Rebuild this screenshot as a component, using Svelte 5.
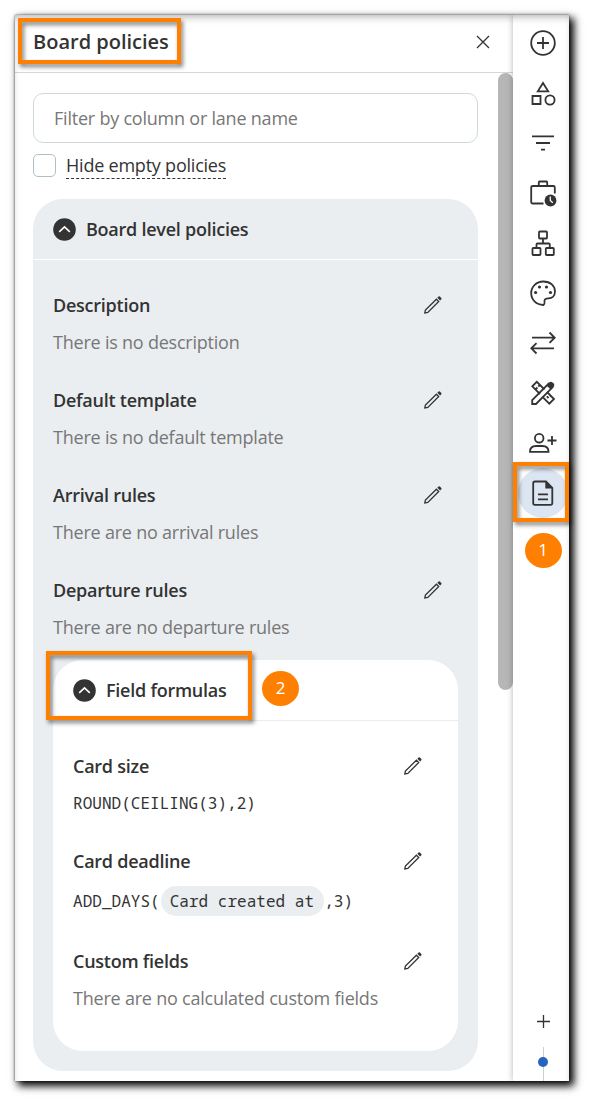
<script lang="ts">
	interface Policy {
		title: string;
		text?: string;
		formula?: { before: string; field?: string; after?: string };
	}

	let filter = '';
	let hideEmpty = false;
	let boardOpen = true;
	let formulasOpen = true;
	let active = 'policies';

	const boardPolicies: Policy[] = [
		{ title: 'Description', text: 'There is no description' },
		{ title: 'Default template', text: 'There is no default template' },
		{ title: 'Arrival rules', text: 'There are no arrival rules' },
		{ title: 'Departure rules', text: 'There are no departure rules' }
	];

	const fieldFormulas: Policy[] = [
		{ title: 'Card size', formula: { before: 'ROUND(CEILING(3),2)' } },
		{ title: 'Card deadline', formula: { before: 'ADD_DAYS(', field: 'Card created at', after: ',3)' } },
		{ title: 'Custom fields', text: 'There are no calculated custom fields' }
	];

	const tools = ['add', 'shapes', 'filter', 'timesheet', 'structure', 'theme', 'transfer', 'tools', 'invite', 'policies'];
</script>

{#snippet pencil()}
	<button class="edit" aria-label="edit">
		<svg width="20" height="20" viewBox="0 0 20 20">
			<path d="M1.8 18l.6-3L13.4 4.2l2.3 2.3L4.8 17.4z" />
			<path class="solid" d="M14.3 2.8l1.3-1.2q.6-.6 1.3 0l1.4 1.4q.6.7 0 1.3l-1.2 1.3z" />
		</svg>
	</button>
{/snippet}

{#snippet chevron()}
	<svg class="chevron" width="23" height="23" viewBox="0 0 23 23">
		<circle cx="11.5" cy="11.5" r="11.3" />
		<path d="M6.2 13.8l5.3-5 5.3 5" />
	</svg>
{/snippet}

{#snippet policy(item: Policy)}
	<div class="policy">
		<div class="policy-title">
			<h3>{item.title}</h3>
			{@render pencil()}
		</div>
		{#if item.formula}
			<div class="formula" class:with-field={item.formula.field}>
				<span>{item.formula.before}</span>
				{#if item.formula.field}
					<span class="field">{item.formula.field}</span>
					<span>{item.formula.after}</span>
				{/if}
			</div>
		{:else}
			<p>{item.text}</p>
		{/if}
	</div>
{/snippet}

<div class="page">
	<div class="window">
		<section class="panel">
			<header>
				<h1>Board policies</h1>
				<button class="close" aria-label="close">
					<svg width="14" height="14" viewBox="0 0 14 14"><path d="M1 1l12 12M13 1L1 13" /></svg>
				</button>
			</header>
			<div class="scroll">
				<div class="content">
					<input class="filter" placeholder="Filter by column or lane name" bind:value={filter} />
					<label>
						<input type="checkbox" bind:checked={hideEmpty} />
						<span>Hide empty policies</span>
					</label>
					<div class="group board">
						<button class="group-head" on:click={() => (boardOpen = !boardOpen)}>
							{@render chevron()}
							Board level policies
						</button>
						{#if boardOpen}
							{#each boardPolicies as item}
								{@render policy(item)}
							{/each}
							<div class="group formulas">
								<button class="group-head" on:click={() => (formulasOpen = !formulasOpen)}>
									{@render chevron()}
									Field formulas
								</button>
								{#if formulasOpen}
									{#each fieldFormulas as item}
										{@render policy(item)}
									{/each}
								{/if}
							</div>
						{/if}
					</div>
				</div>
				<div class="track"><div class="thumb"></div></div>
			</div>
		</section>

		<nav>
			{#each tools as tool}
				<button class="tool" class:active={tool === active} aria-label={tool} on:click={() => (active = tool)}>
					<svg width="30" height="30" viewBox="0 0 30 30">
						{#if tool === 'add'}
							<circle cx="15" cy="15" r="11.8" />
							<path d="M15 9v12M9 15h12" />
						{:else if tool === 'shapes'}
							<path d="M15 5l5.2 8.3H9.8z" />
							<path d="M4.5 18h8v8h-8z" />
							<circle cx="22" cy="22" r="4.6" />
						{:else if tool === 'filter'}
							<path d="M4 8.3h22M8 15h14M13 21.7h4" />
						{:else if tool === 'timesheet'}
							<path d="M15.5 25.5H4.7q-1.500 0-1.500-1.500V9.500Q3.200 8 4.700 8h20.600q1.500 0 1.500 1.500v6" />
							<path d="M10.800 8V4.300q0-.8.8-.8h6.800q.8 0 .8.8V8" />
							<circle class="solid" cx="22.500" cy="22.500" r="5.900" />
							<path class="hand" d="M22.300 18.500v4l2.500 2.200" />
						{:else if tool === 'structure'}
							<rect x="11" y="3.500" width="8" height="7" rx=".8" />
							<rect x="4.500" y="20" width="8" height="7" rx=".8" />
							<rect x="17.800" y="20" width="8" height="7" rx=".8" />
							<path d="M15 10.500v5M8.500 20v-3.500q0-1 1-1h11.300q1 0 1 1V20" />
						{:else if tool === 'theme'}
							<path d="M15.500 27C8 27 3.200 21.500 3.200 15S8.500 3.500 15.300 3.500c7.200 0 11.700 4.500 11.700 10 0 4.500-3 6.800-6.500 6.800-3 0-4.300 1.200-4 3.200.2 1.500-.3 3-1 3.500z" />
							<g class="dots">
								<circle cx="7.600" cy="14.500" r="1.600" />
								<circle cx="11.500" cy="9" r="1.600" />
								<circle cx="18.500" cy="9" r="1.600" />
								<circle cx="22.500" cy="14.500" r="1.600" />
							</g>
						{:else if tool === 'transfer'}
							<path d="M4 9.700h22.500M21.500 4.500l5.200 5.200-5.200 5.200M26 20.300H3.500M8.500 15.100l-5.200 5.200 5.200 5.200" />
						{:else if tool === 'tools'}
							<path d="M12 16L4.300 8.300l4.500-4.500 7.700 7.700M19 14l7 7-4.700 4.700-6.800-6.900M9.500 9.500l-1.700 1.500M12.300 6.800l-2 1.700M18.800 18.300l1.800 1.700M22 18.700l1.300-1.400" />
							<path d="M4.200 26v-4L20.700 5.500l3.800 3.800L8 26z" />
							<path class="solid" d="M18.500 7.500l3-3.200q1.600-1.200 3 .1l1.200 1.200q1.300 1.500.1 3l-3.200 3z" />
						{:else if tool === 'invite'}
							<circle cx="11.200" cy="10.200" r="4.300" />
							<path d="M2 23.800q0-5.800 6-5.800h6.500q6 0 6 5.800z" />
							<path d="M24 8v9M19.500 12.500h9" />
						{:else}
							<path d="M7 3.500h11l6.300 6.300V25q0 1.800-1.800 1.800H7q-1.800 0-1.800-1.800V5.300Q5.200 3.500 7 3.500z" />
							<path class="solid" d="M17.300 3.500v7h7.300z" />
							<path d="M10 16.300h10M10 21.300h10" />
						{/if}
					</svg>
				</button>
			{/each}
			<div class="timeline">
				<svg width="14" height="14" viewBox="0 0 14 14"><path d="M7.5 1v13M1 7.5h13" /></svg>
				<div class="line"><i></i></div>
			</div>
		</nav>
	</div>

	<!-- callouts laid over the window -->
	<div class="mark mark-title"></div>
	<div class="mark mark-tool"></div>
	<div class="mark mark-formulas"></div>
	<div class="step step-1">1</div>
	<div class="step step-2">2</div>
</div>

<style>
	:global(body) {
		margin: 0;
		background: #fff;
	}

	.page {
		position: relative;
		box-sizing: border-box;
		width: 596px;
		height: 1108px;
		padding: 15px;
		overflow: hidden;
		font-family: 'Open Sans', 'Noto Sans', sans-serif;
		font-size: 18px;
		letter-spacing: -0.22px;
		color: #333;
	}

	.window {
		position: relative;
		display: flex;
		width: 554px;
		height: 1066px;
		background: #fff;
		box-shadow:
			0 0 2px rgba(0, 0, 0, 0.6),
			4px 4px 8px 1px #000;
	}

	.window::after {
		content: '';
		position: absolute;
		inset: 0;
		box-shadow: inset 0 5px 8px -4px rgba(0, 0, 0, 0.35);
		pointer-events: none;
	}

	button {
		padding: 0;
		border: 0;
		background: none;
		font: inherit;
		letter-spacing: inherit;
		color: inherit;
		cursor: pointer;
	}

	svg {
		display: block;
		fill: none;
		stroke: #333;
		stroke-width: 1.8;
	}

	h1,
	h3,
	p {
		margin: 0;
	}

	.panel {
		display: flex;
		flex-direction: column;
		width: 498px;
	}

	header {
		display: flex;
		justify-content: space-between;
		align-items: center;
		box-sizing: border-box;
		height: 58px;
		padding: 0 23px 3px 18px;
		border-bottom: 1px solid #cfd8dc;
	}

	h1 {
		padding-bottom: 2px;
		font-size: 20px;
		font-weight: 590;
		letter-spacing: 0;
	}

	.close svg {
		stroke-width: 1.3;
	}

	.scroll {
		display: flex;
		flex: 1;
	}

	.content {
		width: 445px;
		padding: 20px 20px 0 18px;
	}

	.filter {
		display: block;
		box-sizing: border-box;
		width: 100%;
		height: 50px;
		padding: 0 20px;
		border: 1px solid #cfd8dc;
		border-radius: 10px;
		font: inherit;
		letter-spacing: inherit;
		outline: none;
	}

	.filter::placeholder {
		color: #777;
		opacity: 1;
	}

	label {
		display: flex;
		gap: 10px;
		height: 45px;
		padding-top: 11px;
	}

	input[type='checkbox'] {
		appearance: none;
		box-sizing: border-box;
		width: 23px;
		height: 23px;
		margin: 0;
		border: 1px solid #b0bec5;
		border-radius: 5px;
	}

	label span {
		height: 24px;
		line-height: 23px;
		border-bottom: 1px dashed #333;
	}

	.group {
		border-radius: 30px;
	}

	.board {
		padding-bottom: 20px;
		background: #eaeef1;
	}

	.formulas {
		margin: 20px 20px 0;
		padding-bottom: 40px;
		background: #fff;
	}

	.group-head {
		display: flex;
		align-items: center;
		gap: 10px;
		width: 100%;
		height: 61px;
		padding-left: 20px;
		border-bottom: 1px solid #fff;
		font-weight: 540;
		letter-spacing: -0.25px;
	}

	.formulas .group-head {
		border-color: #eaeef1;
	}

	.chevron {
		fill: #333;
		stroke: none;
	}

	.chevron path {
		fill: none;
		stroke: #fff;
		stroke-width: 1.6;
	}

	.policy {
		padding: 32px 35px 0 20px;
	}

	.policy-title {
		display: flex;
		justify-content: space-between;
		align-items: center;
		height: 26px;
		margin-bottom: 11px;
	}

	h3 {
		font-size: 18px;
		font-weight: 540;
		line-height: 26px;
		letter-spacing: -0.25px;
	}

	.edit svg {
		stroke-width: 1.3;
	}

	p {
		line-height: 26px;
		color: #777;
	}

	.formula {
		display: flex;
		align-items: center;
		height: 26px;
		font-family: 'Noto Sans Mono', 'DejaVu Sans Mono', monospace;
		font-size: 16px;
		letter-spacing: 0.03px;
		white-space: nowrap;
	}

	.with-field {
		height: 31px;
	}

	.field {
		height: 30px;
		margin: 1px 0 0 1px;
		padding: 0 10px 0 9px;
		border-radius: 15px;
		background: #eaeef1;
		line-height: 30px;
	}

	.track {
		width: 15px;
	}

	.thumb {
		height: 617px;
		border-radius: 8px;
		background: #b6b6b6;
	}

	nav {
		display: flex;
		flex-direction: column;
		align-items: center;
		width: 56px;
		padding-top: 3px;
		box-sizing: border-box;
		background: #fff;
		box-shadow: 0 0 6px rgba(0, 0, 0, 0.3);
		clip-path: inset(0 0 0 -10px);
		padding-left: 4px;
	}

	.tool {
		display: flex;
		justify-content: center;
		align-items: center;
		width: 50px;
		height: 50px;
		border-radius: 50%;
	}

	.tool.active {
		background: #dce6f3;
	}

	.solid,
	.dots {
		fill: #333;
		stroke: none;
	}

	.hand {
		stroke: #fff;
		stroke-width: 1.3;
	}

	.timeline {
		display: flex;
		flex-direction: column;
		align-items: center;
		gap: 19px;
		margin-top: auto;
	}

	.timeline svg {
		stroke-width: 1.3;
	}

	.line {
		display: flex;
		justify-content: center;
		align-items: center;
		width: 1px;
		height: 34px;
		background: #c5d0d6;
	}

	.line i {
		flex: none;
		width: 10px;
		height: 10px;
		margin-top: -4px;
		border-radius: 50%;
		background: #2764bf;
	}

	.mark {
		position: absolute;
		box-sizing: border-box;
		border: 4px solid #ff8000;
		filter: drop-shadow(2px 3px 2px rgba(0, 0, 0, 0.5));
	}

	.mark-title {
		left: 18px;
		top: 18px;
		width: 163px;
		height: 46px;
	}

	.mark-tool {
		left: 513px;
		top: 462px;
		width: 56px;
		height: 60px;
	}

	.mark-formulas {
		left: 46px;
		top: 651px;
		width: 206px;
		height: 69px;
	}

	.step {
		position: absolute;
		width: 37px;
		height: 35px;
		border-radius: 50%;
		background: #ff8000;
		color: #fff;
		font-size: 17px;
		line-height: 33px;
		text-align: center;
	}

	.step-1 {
		left: 524.5px;
		top: 532.5px;
	}

	.step-2 {
		left: 262px;
		top: 670.5px;
	}
</style>
